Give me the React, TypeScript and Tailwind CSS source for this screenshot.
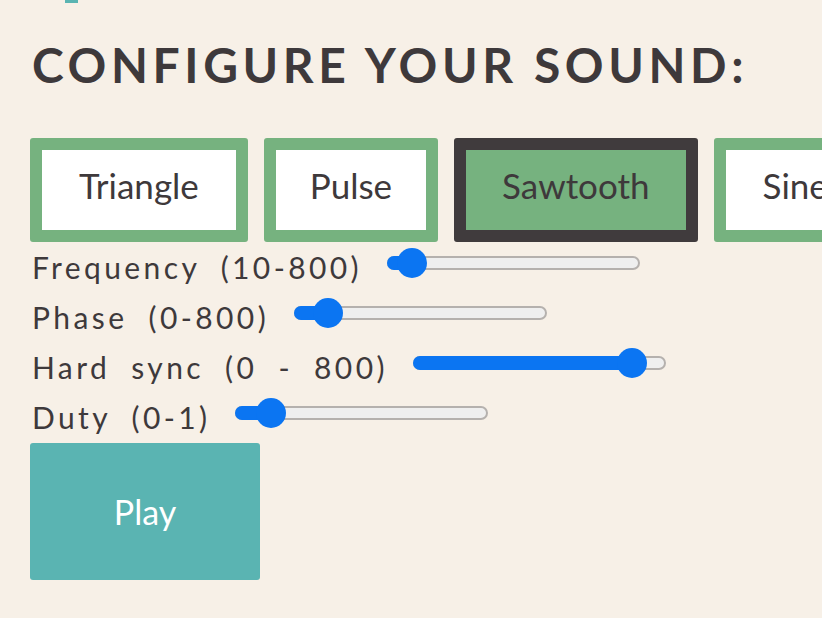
import React from "react";

const sliders = [
  { label: "Frequency (10-800)", frac: 0.045 },
  { label: "Phase (0-800)", frac: 0.085 },
  { label: "Hard sync (0 - 800)", frac: 0.915 },
  { label: "Duty (0-1)", frac: 0.09 },
];

function Slider({ frac }: { frac: number }) {
  const thumbCenter = 15 + frac * 223;
  return (
    <div className="relative w-[253px] h-[30px] mb-[8px] shrink-0">
      <div className="absolute left-0 right-0 top-[8px] h-[14px] rounded-full bg-[#efefef] border-2 border-[#b5b1ae]" />
      <div
        className="absolute left-0 top-[8px] h-[14px] rounded-full bg-[#0b75f2]"
        style={{ width: thumbCenter }}
      />
      <div
        className="absolute top-0 w-[30px] h-[30px] rounded-full bg-[#0b75f2]"
        style={{ left: thumbCenter - 15 }}
      />
    </div>
  );
}

export default function App() {
  const waves = [
    { name: "Triangle", active: false, pad: "px-[37px]" },
    { name: "Pulse", active: false, pad: "px-[34px]" },
    { name: "Sawtooth", active: true, pad: "px-[36px]" },
    { name: "Sine", active: false, pad: "px-[37px]" },
  ];
  return (
    <div
      className="w-[822px] h-[618px] overflow-hidden bg-[#f7f0e7] text-[#3e393b] relative"
      style={{ fontFamily: "Lato, 'Noto Sans', sans-serif" }}
    >
      <div className="absolute left-[65px] top-0 w-[13px] h-[3px] bg-[#5ab4b2]" />
      <div className="pl-[30px] pt-[40px]">
        <h1 className="h-[50px] leading-[50px] text-[48px] font-bold tracking-[4.6px] pl-[2px] whitespace-nowrap">
          CONFIGURE YOUR SOUND:
        </h1>
        <div className="flex gap-[16px] mt-[48px] whitespace-nowrap">
          {waves.map((w) => (
            <button
              key={w.name}
              className={
                "shrink-0 h-[104px] pb-[10px] border-[12px] rounded-[3px] text-[35px] text-[#3e393b] " +
                w.pad +
                " " +
                (w.active
                  ? "border-[#403b3d] bg-[#76b27f]"
                  : "border-[#76b27f] bg-white")
              }
            >
              {w.name}
            </button>
          ))}
        </div>
        <div className="flex flex-col">
          {sliders.map((s) => (
            <div key={s.label} className="flex items-center h-[50px] gap-[25px]">
              <span className="text-[30px] tracking-[3.4px] pl-[2px] whitespace-pre [word-spacing:10px]">
                {s.label}
              </span>
              <Slider frac={s.frac} />
            </div>
          ))}
        </div>
        <button className="mt-[1px] w-[230px] h-[137px] rounded-[3px] bg-[#5ab4b2] text-white text-[34px]">
          Play
        </button>
      </div>
    </div>
  );
}
